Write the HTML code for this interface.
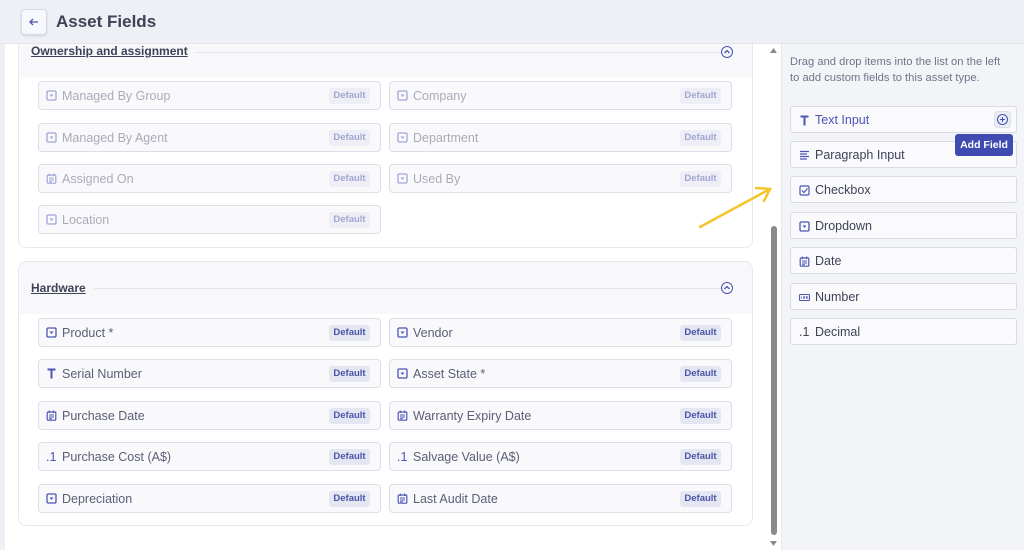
<!DOCTYPE html>
<html><head><meta charset="utf-8"><style>
*{box-sizing:border-box;margin:0;padding:0}
body{width:1024px;height:550px;overflow:hidden;background:#fff;font-family:"Liberation Sans",sans-serif;position:relative;color:#555a70}
.hdr{position:absolute;left:0;top:0;width:1024px;height:44px;background:#eef0f5;border-bottom:1px solid #e3e5ec;z-index:10}
.back{position:absolute;left:21px;top:9px;width:26px;height:26px;border:1px solid #d8dbe5;border-radius:4px;background:#f7f8fb;box-shadow:0 1px 2px rgba(0,0,0,.12)}
.title{position:absolute;left:56px;top:12px;font-size:17px;font-weight:bold;color:#3e4257}
.lstrip{position:absolute;left:0;top:44px;width:5px;height:506px;background:#eef0f5}
.card{position:absolute;left:18px;width:735px;border:1px solid #e6e8ee;border-radius:8px;background:#fff}
.chead{position:absolute;left:0;top:0;width:733px;background:#f8f8fb;border-radius:8px 8px 0 0}
.ctitle{position:absolute;left:12px;font-size:12px;font-weight:bold;color:#3e4257;text-decoration:underline;background:#f8f8fb;padding-right:8px}
.cline{position:absolute;left:12px;width:692px;height:1px;background:#e3e5ec}
.chev{position:absolute;left:702px;width:12px;height:12px;border:1.3px solid #4a55b5;border-radius:50%}
.f{position:absolute;width:343px;height:29px;border:1px solid #dcdfe8;border-radius:4px;background:#f9f9fc;font-size:12.5px;color:#5a5f75}
.f .ic{position:absolute;left:7px;top:8px;width:11px;height:11px}
.f .t{position:absolute;left:23px;top:7px}
.f .d{position:absolute;right:10px;top:6px;width:41px;height:16px;background:#e4e6f2;border-radius:3px;font-size:9.5px;font-weight:bold;color:#4a55a8;text-align:center;line-height:16px}
.dim{opacity:.5}
.sb{position:absolute;left:766px;top:44px;width:15px;height:506px;background:#fff}
.thumb{position:absolute;left:771px;top:226px;width:6px;height:309px;background:#8a8a8a;border-radius:3px}
.rp{position:absolute;left:781px;top:44px;width:243px;height:506px;background:#f3f4f8;border-left:1px solid #e6e8ee}
.rtxt{position:absolute;left:790px;top:54px;font-size:11.2px;line-height:16px;color:#70748a;width:234px;white-space:nowrap}
.it{position:absolute;left:790px;width:227px;height:27px;border:1px solid #d8dbe5;border-radius:3px;background:#fafafd;font-size:12.5px;color:#3e4257}
.it .ic{position:absolute;left:8px;top:8px;width:11px;height:11px}
.it .t{position:absolute;left:24px;top:6px}
.tip{position:absolute;left:955px;top:134px;width:58px;height:22px;background:#3f4bb0;border-radius:3px;color:#fff;font-size:10.5px;font-weight:bold;text-align:center;line-height:22px}
</style></head><body>
<div class="hdr"><div class="back"><svg width="26" height="26" viewBox="0 0 26 26" style="position:absolute;left:-1px;top:-1px"><path d="M17 13H9M12 10l-3 3 3 3" stroke="#4a55b5" stroke-width="1.3" fill="none"/></svg></div><div class="title">Asset Fields</div></div>
<div class="lstrip"></div>

<svg width="0" height="0" style="position:absolute"><defs>
<symbol id="dd" viewBox="0 0 11 11"><rect x="1" y="1" width="9" height="9" rx="1.2" fill="none" stroke="#4a55b5" stroke-width="1.3"/><path d="M3.5 4.5h4L5.5 7z" fill="#4a55b5"/></symbol>
<symbol id="cal" viewBox="0 0 11 11"><rect x="1.2" y="2" width="8.6" height="8.2" rx="1" fill="none" stroke="#4a55b5" stroke-width="1.2"/><path d="M3.3 .5v2.5M7.7 .5v2.5M3 5h5M3 7h5M3 8.8h3" stroke="#4a55b5" stroke-width="1"/></symbol>
<symbol id="tt" viewBox="0 0 11 11"><path d="M1.5 1.5h8M5.5 1.5v9" stroke="#4a55b5" stroke-width="2"/></symbol>
<symbol id="par" viewBox="0 0 11 11"><path d="M1 1.5h9M1 4h7M1 6.5h9M1 9h7" stroke="#4a55b5" stroke-width="1.2"/></symbol>
<symbol id="chk" viewBox="0 0 11 11"><rect x="1" y="1" width="9" height="9" rx="1.2" fill="none" stroke="#4a55b5" stroke-width="1.2"/><path d="M3 5.5l2 2 3.5-4" fill="none" stroke="#4a55b5" stroke-width="1.2"/></symbol>
<symbol id="num" viewBox="0 0 11 11"><rect x=".6" y="2.5" width="9.8" height="6" rx=".8" fill="none" stroke="#4a55b5" stroke-width="1.1"/><path d="M2.5 4.5v2M4.5 4.5h1.2v1h-1.2v1h1.2M7 4.5h1.2v2H7M7 5.5h1.2" stroke="#4a55b5" stroke-width=".7" fill="none"/></symbol>
</defs></svg>

<div class="card" style="top:30px;height:218px">
 <div class="chead" style="height:46px"></div>
 <div class="cline" style="top:21px"></div>
 <div class="ctitle" style="top:13px">Ownership and assignment</div>
 <div class="chev" style="top:15px"><svg width="10" height="10" viewBox="0 0 10 10" style="position:absolute;left:0;top:0"><path d="M2.5 6l2.5-2.5L7.5 6" stroke="#4a55b5" stroke-width="1.3" fill="none"/></svg></div>
</div>
<div class="f" style="left:38px;top:81px"><div class="dim"><svg class="ic"><use href="#dd"/></svg><span class="t">Managed By Group</span><span class="d">Default</span></div></div>
<div class="f" style="left:389px;top:81px"><div class="dim"><svg class="ic"><use href="#dd"/></svg><span class="t">Company</span><span class="d">Default</span></div></div>
<div class="f" style="left:38px;top:123px"><div class="dim"><svg class="ic"><use href="#dd"/></svg><span class="t">Managed By Agent</span><span class="d">Default</span></div></div>
<div class="f" style="left:389px;top:123px"><div class="dim"><svg class="ic"><use href="#dd"/></svg><span class="t">Department</span><span class="d">Default</span></div></div>
<div class="f" style="left:38px;top:164px"><div class="dim"><svg class="ic"><use href="#cal"/></svg><span class="t">Assigned On</span><span class="d">Default</span></div></div>
<div class="f" style="left:389px;top:164px"><div class="dim"><svg class="ic"><use href="#dd"/></svg><span class="t">Used By</span><span class="d">Default</span></div></div>
<div class="f" style="left:38px;top:205px"><div class="dim"><svg class="ic"><use href="#dd"/></svg><span class="t">Location</span><span class="d">Default</span></div></div>

<div class="card" style="top:261px;height:265px">
 <div class="chead" style="height:52px"></div>
 <div class="cline" style="top:26px"></div>
 <div class="ctitle" style="top:19px">Hardware</div>
 <div class="chev" style="top:20px"><svg width="10" height="10" viewBox="0 0 10 10" style="position:absolute;left:0;top:0"><path d="M2.5 6l2.5-2.5L7.5 6" stroke="#4a55b5" stroke-width="1.3" fill="none"/></svg></div>
</div>
<div class="f" style="left:38px;top:318px"><svg class="ic"><use href="#dd"/></svg><span class="t">Product *</span><span class="d">Default</span></div>
<div class="f" style="left:389px;top:318px"><svg class="ic"><use href="#dd"/></svg><span class="t">Vendor</span><span class="d">Default</span></div>
<div class="f" style="left:38px;top:359px"><svg class="ic"><use href="#tt"/></svg><span class="t">Serial Number</span><span class="d">Default</span></div>
<div class="f" style="left:389px;top:359px"><svg class="ic"><use href="#dd"/></svg><span class="t">Asset State *</span><span class="d">Default</span></div>
<div class="f" style="left:38px;top:401px"><svg class="ic"><use href="#cal"/></svg><span class="t">Purchase Date</span><span class="d">Default</span></div>
<div class="f" style="left:389px;top:401px"><svg class="ic"><use href="#cal"/></svg><span class="t">Warranty Expiry Date</span><span class="d">Default</span></div>
<div class="f" style="left:38px;top:442px"><span style="position:absolute;left:7px;top:7px;color:#4a55b5">.1</span><span class="t">Purchase Cost (A$)</span><span class="d">Default</span></div>
<div class="f" style="left:389px;top:442px"><span style="position:absolute;left:7px;top:7px;color:#4a55b5">.1</span><span class="t">Salvage Value (A$)</span><span class="d">Default</span></div>
<div class="f" style="left:38px;top:484px"><svg class="ic"><use href="#dd"/></svg><span class="t">Depreciation</span><span class="d">Default</span></div>
<div class="f" style="left:389px;top:484px"><svg class="ic"><use href="#cal"/></svg><span class="t">Last Audit Date</span><span class="d">Default</span></div>

<div class="sb"></div>
<svg style="position:absolute;left:769px;top:47px" width="9" height="7"><path d="M1 6h7L4.5 1z" fill="#8a8a8a"/></svg>
<div class="thumb"></div>
<svg style="position:absolute;left:769px;top:540px" width="9" height="7"><path d="M1 1h7L4.5 6z" fill="#8a8a8a"/></svg>

<div class="rp"></div>
<div class="rtxt">Drag and drop items into the list on the left<br>to add custom fields to this asset type.</div>
<div class="it" style="top:106px"><svg class="ic"><use href="#tt"/></svg><span class="t" style="color:#4a55b5">Text Input</span>
 <div style="position:absolute;right:5px;top:4px;width:17px;height:17px;border-radius:4px;background:#eceef5;border:1px solid #dcdfe8"><svg width="15" height="15" viewBox="0 0 15 15" style="position:absolute;left:0;top:0"><circle cx="7.5" cy="7.5" r="5" fill="none" stroke="#4a55b5" stroke-width="1.1"/><path d="M7.5 5v5M5 7.5h5" stroke="#4a55b5" stroke-width="1.1"/></svg></div></div>
<div class="it" style="top:141px"><svg class="ic"><use href="#par"/></svg><span class="t">Paragraph Input</span></div>
<div class="tip">Add Field</div>
<div class="it" style="top:176px"><svg class="ic"><use href="#chk"/></svg><span class="t">Checkbox</span></div>
<div class="it" style="top:212px"><svg class="ic"><use href="#dd"/></svg><span class="t">Dropdown</span></div>
<div class="it" style="top:247px"><svg class="ic"><use href="#cal"/></svg><span class="t">Date</span></div>
<div class="it" style="top:283px"><svg class="ic"><use href="#num"/></svg><span class="t">Number</span></div>
<div class="it" style="top:318px"><span style="position:absolute;left:8px;top:6px">.1</span><span class="t">Decimal</span></div>

<svg style="position:absolute;left:690px;top:180px" width="90" height="55"><path d="M10 47L80 9M66 8l14 1-6 12" stroke="#f5c429" stroke-width="2.5" fill="none" stroke-linecap="round"/></svg>
</body></html>
